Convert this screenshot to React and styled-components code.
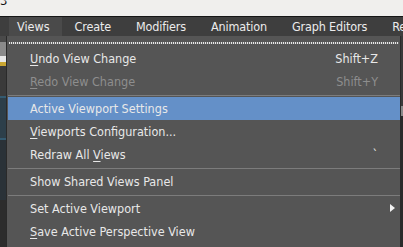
import React from 'react'
import styled, { createGlobalStyle } from 'styled-components'

const GlobalStyle = createGlobalStyle`
  html, body {
    margin: 0;
    padding: 0;
    background: #2e2e2e;
    overflow: hidden;
  }
  body {
    font-family: "DejaVu Sans Condensed", "DejaVu Sans", sans-serif;
  }
`

const menuBarItems = ['Views', 'Create', 'Modifiers', 'Animation', 'Graph Editors', 'Re']

const entries = [
  { label: 'Undo View Change', key: 0, shortcut: 'Shift+Z' },
  { label: 'Redo View Change', key: 0, shortcut: 'Shift+Y', disabled: true },
  { sep: true },
  { label: 'Active Viewport Settings', active: true },
  { label: 'Viewports Configuration...', key: 0 },
  { label: 'Redraw All Views', key: 11, shortcut: '`' },
  { sep: true },
  { label: 'Show Shared Views Panel' },
  { sep: true },
  { label: 'Set Active Viewport', submenu: true },
  { label: 'Save Active Perspective View', key: 0 },
]

function Label({ text, at }) {
  if (at === undefined) return text
  return (
    <>
      {text.slice(0, at)}
      <Key>{text[at]}</Key>
      {text.slice(at + 1)}
    </>
  )
}

export default function App() {
  return (
    <Page>
      <GlobalStyle />
      <TitleStrip>
        <Digit>3</Digit>
      </TitleStrip>
      <MenuBar>
        {menuBarItems.map((m, i) => (
          <BarItem key={m} open={i === 0}>{m}</BarItem>
        ))}
      </MenuBar>
      <Body>
        <LeftEdge>
          <EdgeBlock tone="#4a4a4a" h={6} />
          <EdgeBlock tone="#8a8a8a" h={14} />
          <EdgeBlock tone="#e8e8e8" h={6} />
          <EdgeBlock tone="#c9a632" h={4} />
          <EdgeBlock tone="#3a3a3a" h={30} />
          <EdgeBlock tone="#345a70" h={2} />
          <EdgeBlock tone="#2d3f4a" h={40} />
          <EdgeBlock tone="#345a70" h={2} />
          <EdgeBlock tone="#2a3238" h={60} />
        </LeftEdge>
        <Menu>
          <TearOff />
          {entries.map((e, i) =>
            e.sep ? (
              <Separator key={i} />
            ) : (
              <Item key={i} active={e.active} disabled={e.disabled}>
                <span>
                  <Label text={e.label} at={e.key} />
                </span>
                {e.shortcut && <Shortcut>{e.shortcut}</Shortcut>}
                {e.submenu && <Arrow />}
              </Item>
            )
          )}
        </Menu>
        <RightEdge />
      </Body>
    </Page>
  )
}

const Page = styled.div`
  width: 403px;
  height: 247px;
  display: flex;
  flex-direction: column;
  overflow: hidden;
`

const TitleStrip = styled.div`
  height: 16px;
  background: #f0efed;
  position: relative;
  overflow: hidden;
`

const Digit = styled.span`
  position: absolute;
  left: 0;
  top: -7px;
  font-size: 13px;
  color: #111;
`

const MenuBar = styled.div`
  height: 19px;
  border-top: 1px solid #161616;
  background: #3e3e3e;
  display: flex;
  align-items: stretch;
  padding-left: 9px;
  overflow: hidden;
`

const BarItem = styled.div`
  display: flex;
  align-items: center;
  padding: 0 12px 0 ${p => (p.open ? 8 : 13)}px;
  font-size: 12.5px;
  letter-spacing: ${p => (p.open ? 0 : -0.15)}px;
  color: #ececec;
  white-space: nowrap;
  background: ${p => (p.open ? '#4a4a4a' : 'transparent')};
`

const Body = styled.div`
  flex: 1;
  display: flex;
  min-height: 0;
`

const LeftEdge = styled.div`
  width: 6px;
  display: flex;
  flex-direction: column;
  background: #2c2c2c;
`

const EdgeBlock = styled.div`
  height: ${p => p.h}px;
  background: ${p => p.tone};
`

const RightEdge = styled.div`
  width: 2px;
  background: linear-gradient(#3a3a3a 0 70px, #8a8a8a 70px 80px, #2a2a2a 80px);
`

const Menu = styled.div`
  flex: 1;
  background: #555555;
  border-left: 1px solid #2a2a2a;
  border-right: 1px solid #2a2a2a;
  padding: 0 0 0 1px;
  display: flex;
  flex-direction: column;
`

const TearOff = styled.div`
  height: 11px;
  flex-shrink: 0;
  display: flex;
  align-items: center;
  padding: 0 1px;
  &::before {
    content: '';
    flex: 1;
    height: 2px;
    margin-top: 2px;
    background: repeating-linear-gradient(90deg, #e6e6e6 0 1px, #6a6a6a 1px 2px);
  }
`

const Item = styled.div`
  height: 23px;
  flex-shrink: 0;
  display: flex;
  align-items: center;
  padding: 0 22px 0 22px;
  font-size: 12.5px;
  white-space: nowrap;
  color: ${p => (p.disabled ? '#8e8e8e' : '#e8e8e8')};
  background: ${p => (p.active ? '#6490c8' : 'transparent')};
  position: relative;
  > span:first-child {
    flex: 1;
  }
`

const Key = styled.u`
  text-underline-offset: 2px;
`

const Shortcut = styled.span`
  text-align: right;
`

const Arrow = styled.span`
  position: absolute;
  right: 5px;
  top: 7px;
  width: 0;
  height: 0;
  border-top: 4px solid transparent;
  border-bottom: 4px solid transparent;
  border-left: 5px solid #f2f2f2;
`

const Separator = styled.div`
  height: 4px;
  flex-shrink: 0;
  display: flex;
  align-items: center;
  &::before {
    content: '';
    flex: 1;
    height: 1px;
    background: #7c7c7c;
  }
`
